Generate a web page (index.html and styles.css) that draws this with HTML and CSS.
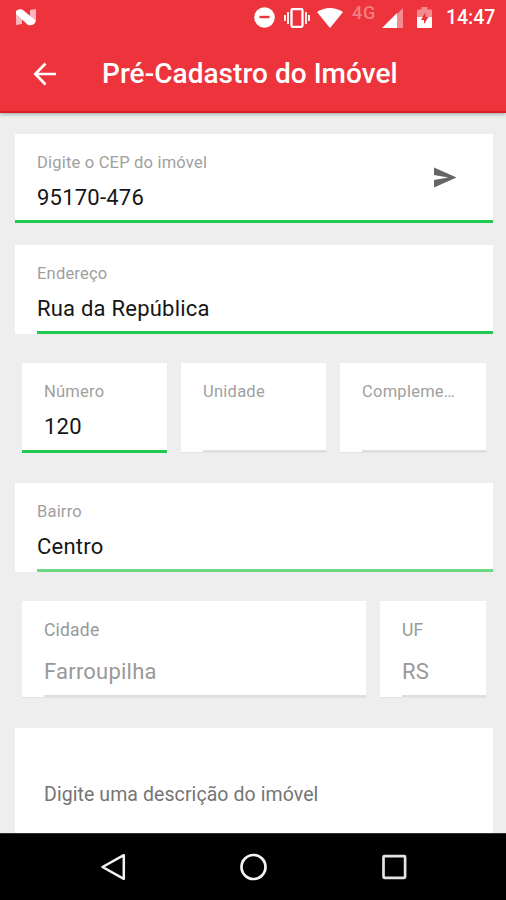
FILE: index.html
```html
<!DOCTYPE html>
<html lang="pt-BR">
<head>
<meta charset="utf-8">
<title>Pré-Cadastro do Imóvel</title>
<link rel="stylesheet" href="styles.css">
</head>
<body>
<div class="screen">
  <header class="header">
    <div class="status">
      <svg class="nlogo" width="20" height="17" viewBox="0 0 20 17"><path fill="#fbb6bb" d="M0 3 6 0v15L0 16zM14 1l6-1v13l-6 3z"/><path fill="#fff" d="M0 2Q3-1 7 1L19 11v3q-2 3-7 2L0 5z"/></svg>
      <svg class="dnd" width="21" height="21" viewBox="0 0 21 21"><circle cx="10.500" cy="10.500" r="10.300" fill="#fff"/><path stroke="#ed333b" stroke-width="2.400" d="M5.500 10H15.500"/></svg>
      <svg class="vibrate" width="26" height="20" viewBox="0 0 26 20"><rect x="7.500" y="1.200" width="11" height="17.600" rx="1.200" fill="none" stroke="#fff" stroke-width="2.300"/><path fill="none" stroke="#fff" stroke-width="1.800" d="M4 4v12M22 4v12M1 7v6M25 7v6"/></svg>
      <svg class="wifi" width="26" height="20" viewBox="0 0 26 20"><path fill="#fff" d="M0 4Q13-4 26 4L13 20z"/></svg>
      <span class="network">4G</span>
      <svg class="signal" width="21" height="20" viewBox="0 0 21 20"><path fill="#f58a8f" d="M15 6 21 0v20h-6z"/><path fill="#fff" d="M0 20 15 5v15z"/></svg>
      <svg class="battery" width="15" height="21" viewBox="0 0 15 21"><path fill="#f58a8f" d="M1 2.500H4.500V0h6v2.500H14q1 0 1 1V11H0V3.500q0-1 1-1z"/><path fill="#fff" d="M0 10h15v10q0 1-1 1H1q-1 0-1-1z"/><path fill="#ed333b" d="M8.500 5 4 13h3v4l4.500-7h-3z"/></svg>
      <time class="time">14:47</time>
    </div>
    <div class="appbar">
      <svg class="back" width="24" height="24" viewBox="0 0 24 24"><path fill="none" stroke="#fff" stroke-width="2.700" d="M12.500 1.500 2.300 12l10.200 10.500M2.300 12H23"/></svg>
      <h1 class="title">Pré-Cadastro do Imóvel</h1>
    </div>
  </header>

  <main class="form">
    <section class="field full">
      <div class="copy"><span class="label">Digite o CEP do imóvel</span><span class="value">95170-476</span></div>
      <svg class="send" width="23" height="21" viewBox="0 0 24 21"><path fill="#656565" d="M0 0 23.500 10.500 0 21V13l15-2.500L0 8z"/></svg>
    </section>
    <section class="field inset address">
      <span class="label">Endereço</span><span class="value">Rua da República</span>
    </section>
    <div class="row thirds">
      <section class="field full"><span class="label">Número</span><span class="value">120</span></section>
      <section class="field muted"><span class="label">Unidade</span></section>
      <section class="field muted"><span class="label">Compleme…</span></section>
    </div>
    <section class="field inset soft district">
      <span class="label">Bairro</span><span class="value">Centro</span>
    </section>
    <div class="row city">
      <section class="field muted disabled"><span class="label">Cidade</span><span class="value">Farroupilha</span></section>
      <section class="field muted disabled"><span class="label">UF</span><span class="value">RS</span></section>
    </div>
    <section class="description">Digite uma descrição do imóvel</section>
  </main>

  <nav class="navbar">
    <svg width="26" height="28" viewBox="0 0 26 28"><path fill="none" stroke="#f4f4f4" stroke-width="2.500" stroke-linejoin="round" d="M22.800 2.200v23.600L1.500 14z"/></svg>
    <svg width="28" height="28" viewBox="0 0 28 28"><circle cx="13.500" cy="14" r="12" fill="none" stroke="#f4f4f4" stroke-width="2.700"/></svg>
    <svg width="26" height="28" viewBox="0 0 26 28"><rect x="2.500" y="3.200" width="21.600" height="21.600" rx="1" fill="none" stroke="#e4e4e4" stroke-width="2.700"/></svg>
  </nav>
</div>
</body>
</html>
```

FILE: styles.css
```css
* { box-sizing: border-box; }
body { margin: 0; font-family: Roboto, "Liberation Sans", sans-serif; }
svg { display: block; flex: none; }
.screen { width: 506px; height: 900px; display: flex; flex-direction: column; overflow: hidden; background: #eee; }

.header { height: 113px; flex: none; background: #ed333b; border-bottom: 2px solid #df1b22; box-shadow: 0 1px 4px #8f9ea4; color: #fff; }
.status { height: 36px; display: flex; align-items: flex-start; padding: 0 11px 0 16px; }
.nlogo { margin-top: 9px; }
.dnd { margin: 7px 0 0 218px; }
.vibrate { margin: 8px 0 0 9px; }
.wifi { margin: 8px 0 0 7px; }
.network { width: 25px; margin: 1px 0 0 9px; font-size: 18px; line-height: 23px; font-weight: 500; letter-spacing: .7px; color: #f47c82; }
.signal { margin: 8px 0 0 6px; }
.battery { margin: 7px 0 0 14px; }
.time { margin: 6px 0 0 14px; font-size: 19.5px; line-height: 24px; font-weight: 500; white-space: nowrap; }
.appbar { display: flex; align-items: center; height: 75px; padding-left: 33px; }
.title { margin: 0 0 0 45px; font-size: 28px; font-weight: 500; line-height: 36px; letter-spacing: .04px; white-space: nowrap; }

.form { flex: 1; min-height: 0; padding: 21px 13px 0 15px; display: flex; flex-direction: column; }
.field { position: relative; flex: none; height: 89px; padding: 18px 0 0 22px; background: #fff; display: flex; flex-direction: column; min-width: 0; }
.field::after { content: ""; position: absolute; right: 0; bottom: 0; left: 0; height: 3px; background: #20ca50; }
.form > .field.full { flex-direction: row; justify-content: space-between; padding-right: 36px; }
.field.inset::after { left: 22px; }
.field.soft::after { background: #6cda84; }
.field.muted { border-bottom: 1px solid #e3e3e3; }
.field.muted::after { left: 22px; background: #dedede; height: 2px; }
.copy { display: flex; flex-direction: column; }
.label { font-size: 16.5px; line-height: 22px; color: #a0a0a0; white-space: nowrap; letter-spacing: .2px; }
.value { margin-top: 11px; font-size: 22px; line-height: 26px; color: #161616; white-space: nowrap; letter-spacing: .22px; }
.send { margin-top: 15px; }
.address { margin-top: 22px; }
.row { display: grid; column-gap: 14px; margin: 29px 6px 0 7px; flex: none; }
.thirds { grid-template-columns: 145px 145px 146px; }
.thirds .field { height: 90px; }
.thirds .label { letter-spacing: .25px; }
.city { grid-template-columns: 344px 106px; }
.district { margin-top: 30px; }
.city .field { height: 97px; padding-top: 18px; }
.disabled .label { color: #999; font-size: 17.5px; }
.disabled .value { color: #999; margin-top: 18px; }
.description { flex: 1; margin-top: 30px; padding: 54px 0 0 29px; background: #fff; color: #757575; font-size: 19.5px; line-height: 25px; letter-spacing: .08px; white-space: nowrap; }

.navbar { height: 67px; flex: none; background: #000; border-top: 1px solid #333; padding: 0 99px 0 101px; display: flex; align-items: center; justify-content: space-between; }
```
